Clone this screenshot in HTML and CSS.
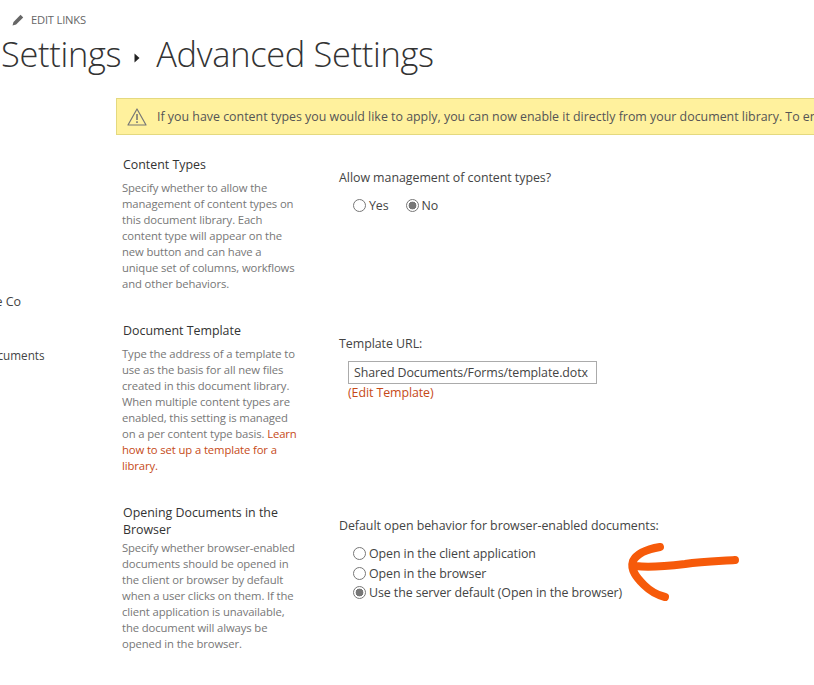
FILE: index.html
```html
<!DOCTYPE html>
<html lang="en">
<head>
<meta charset="utf-8">
<title>Advanced Settings</title>
<link rel="stylesheet" href="styles.css">
</head>
<body>
<header class="top">
  <div class="edit-links">
    <svg class="pencil" width="12" height="12" viewBox="0 0 12 12"><path d="M0.5 11.5l1-3.6L8.6 0.8l2.6 2.6-7.1 7.1z" fill="#666"/></svg>
    <span>EDIT LINKS</span>
  </div>
  <h1 class="title"><span>Settings</span><svg class="crumb" width="6" height="10" viewBox="0 0 6 10"><path d="M0.5 0.5L5.5 5L0.5 9.5z" fill="#222"/></svg><span>Advanced Settings</span></h1>
</header>
<div class="layout">
  <nav class="nav">
    <a class="nav-co">Site Co</a>
    <a class="nav-docs">Documents</a>
  </nav>
  <main class="main">
    <div class="banner">
      <svg class="warn" width="20" height="18" viewBox="0 0 20 18"><path d="M10 1L19 17H1z" fill="none" stroke="#777" stroke-width="1.2" stroke-linejoin="round"/><path d="M10 6v6M10 13.3v1.6" stroke="#777" stroke-width="1.6" fill="none"/></svg>
      <span class="banner-text">If you have content types you would like to apply, you can now enable it directly from your document library. To enable content types</span>
    </div>
    <section class="row row-types">
      <div class="info">
        <h2>Content Types</h2>
        <p>Specify whether to allow the management of content types on this document library. Each content type will appear on the new button and can have a unique set of columns, workflows and other behaviors.</p>
      </div>
      <div class="field">
        <div class="label">Allow management of content types?</div>
        <div class="radios-inline">
          <label class="radio"><input type="radio" name="ct"><span>Yes</span></label>
          <label class="radio"><input type="radio" name="ct" checked><span>No</span></label>
        </div>
      </div>
    </section>
    <section class="row row-template">
      <div class="info">
        <h2>Document Template</h2>
        <p>Type the address of a template to use as the basis for all new files created in this document library. When multiple content types are enabled, this setting is managed on a per content type basis. <a>Learn how to set up a template for a library.</a></p>
      </div>
      <div class="field field-template">
        <div class="label">Template URL:</div>
        <input class="url" type="text" value="Shared Documents/Forms/template.dotx">
        <a class="edit-template">(Edit Template)</a>
      </div>
    </section>
    <section class="row row-open">
      <div class="info">
        <h2>Opening Documents in the Browser</h2>
        <p>Specify whether browser-enabled documents should be opened in the client or browser by default when a user clicks on them. If the client application is unavailable, the document will always be opened in the browser.</p>
      </div>
      <div class="field field-open">
        <div class="label">Default open behavior for browser-enabled documents:</div>
        <div class="radios-stack">
          <label class="radio"><input type="radio" name="op"><span>Open in the client application</span></label>
          <label class="radio"><input type="radio" name="op"><span>Open in the browser</span></label>
          <label class="radio"><input type="radio" name="op" checked><span>Use the server default (Open in the browser)</span></label>
        </div>
      </div>
    </section>
  </main>
</div>
<svg class="arrow" width="814" height="685" viewBox="0 0 814 685"><path d="M660 547C648 549 637 553 633 561C630 570 637 578 644 585C650 591 657 595 665 597M636 566C650 568 668 566 685 564C703 561 720 561 735 560" fill="none" stroke="#f65a0a" stroke-width="8" stroke-linecap="round" stroke-linejoin="round"/></svg>
</body>
</html>
```
FILE: styles.css
```css
* { box-sizing: border-box; }
html, body { margin: 0; height: 685px; overflow: hidden; background: #fff; }
body { position: relative; width: 814px; font-family: "Open Sans", "Liberation Sans", sans-serif; font-size: 12px; color: #444; }
.top { padding: 12px 0 0 1px; height: 98px; }
.edit-links { display: flex; align-items: center; gap: 7px; margin-left: 11px; font-size: 11.2px; line-height: 15px; color: #666; letter-spacing: -0.2px; }
.title { margin: 5px 0 0; display: flex; align-items: center; font-size: 34.4px; line-height: 44px; font-weight: 300; color: #333; letter-spacing: -0.3px; }
.crumb { margin: 8px 16px 0 13px; }
.layout { display: flex; }
.nav { width: 116px; flex: none; padding-top: 195px; font-size: 12.5px; color: #444; white-space: nowrap; }
.nav a { display: block; line-height: 18px; }
.nav-co { margin-left: -19px; }
.nav-docs { margin: 35px 0 0 -18px; font-size: 11.7px; }
.main { width: 698px; flex: none; }
.banner { display: flex; align-items: center; width: 720px; height: 37px; background: #fff19d; border: 1px solid #e4d97f; padding-left: 10px; white-space: nowrap; overflow: hidden; }
.warn { flex: none; }
.banner-text { margin-left: 10px; font-size: 12.4px; color: #555; }
.row { display: flex; padding-left: 6px; }
.row-types { height: 166px; padding-top: 21px; }
.row-template { height: 182px; padding-top: 21px; }
.row-open { padding-top: 21px; }
.info { width: 178px; flex: none; }
.info h2 { margin: 0; font-size: 12.4px; line-height: 17px; font-weight: 400; color: #333; padding-left: 1px; }
.info p { margin: 7px 0 0; font-size: 11.3px; line-height: 16px; color: #777; letter-spacing: -0.12px; }
.info p a { color: #c64a17; }
.row-open .info p { margin-top: 2px; }
.field { margin-left: 39px; padding-top: 13px; }
.label { font-size: 12.4px; line-height: 17px; color: #444; letter-spacing: -0.04px; }
.radios-inline { display: flex; gap: 17px; margin: 10px 0 0 14px; }
.radio { display: flex; align-items: center; gap: 3px; font-size: 12.4px; line-height: 19.5px; color: #444; letter-spacing: -0.08px; }
.radio input { appearance: none; margin: 0; width: 13px; height: 13px; border: 1px solid #777; border-radius: 50%; background: #fff; }
.radio input:checked { background: radial-gradient(circle, #777 0 3.6px, #fff 4.2px); }
.url { display: block; margin: 9px 0 0 9px; width: 249px; height: 23px; border: 1px solid #ababab; padding: 0 5px; font: inherit; font-size: 12.4px; color: #444; letter-spacing: -0.08px; border-radius: 0; outline: none; }
.edit-template { display: block; margin-left: 9px; font-size: 12.4px; line-height: 18px; color: #c64a17; letter-spacing: -0.08px; }
.radios-stack { margin: 10px 0 0 14px; display: flex; flex-direction: column; }
.arrow { position: absolute; left: 0; top: 0; pointer-events: none; }
```
